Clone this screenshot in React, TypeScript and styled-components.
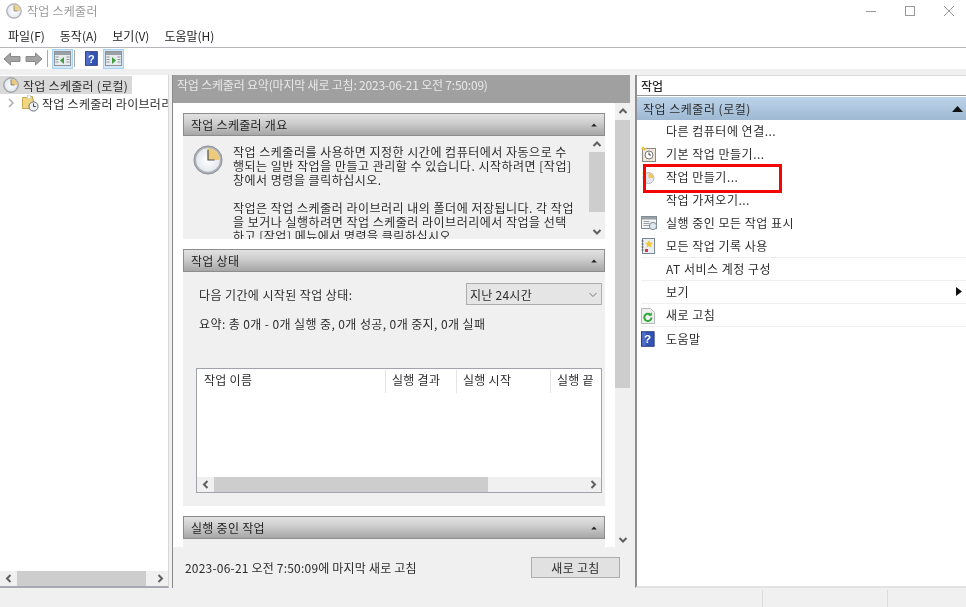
import React from "react";
import styled, { createGlobalStyle } from "styled-components";

const Global = createGlobalStyle`
  html, body { margin: 0; padding: 0; background: #f0f0f0; overflow: hidden; }
  #root { width: 966px; height: 607px; }
  * { box-sizing: border-box; }
`;

const Window = styled.div`
  width: 966px; height: 607px; display: flex; flex-direction: column; background: #fff; overflow: hidden; position: relative;
  font-family: "Noto Sans CJK KR", "Noto Sans", sans-serif; font-size: 12px; color: #2c2c2c; filter: blur(0.4px);
`;
const TitleBar = styled.div`height: 24px; display: flex; align-items: center; padding: 0 0 3px 6px; gap: 5px; color: #9a9a9a; font-size: 12px;`;
const DimIcon = styled.span`display: flex; opacity: .85;`;
const TitleText = styled.span`letter-spacing: .25px;`;
const WinControls = styled.div`margin-left: auto; display: flex; gap: 29px; padding-right: 12px; align-items: center;`;
const MenuBar = styled.div`height: 24px; display: flex; align-items: center; padding: 0 0 1px 8px; gap: 15px; border-bottom: 1px solid #b4b8bc; font-size: 12px; color: #222;`;
const Toolbar = styled.div`height: 21px; background: #fff; display: flex; align-items: center; padding-left: 3px;`;
const ToolSep = styled.div<{ $m: string }>`width: 1px; height: 17px; background: #a8a8a8; margin: 0 ${p => p.$m};`;
const ToolGap = styled.span<{ $w: number }>`width: ${p => p.$w}px; flex: none;`;
const ToolButton = styled.div<{ $active?: boolean }>`
  width: 21px; height: 20px; display: flex; align-items: center; justify-content: center;
  background: ${p => (p.$active ? "#d4e7f8" : "transparent")}; border: 1px solid ${p => (p.$active ? "#a9d3f5" : "transparent")};
`;
const Main = styled.div`flex: 1; min-height: 0; display: flex; background: #f0f0f0; padding-top: 6px;`;

const TreePanel = styled.div`width: 169px; flex: none; display: flex; flex-direction: column; background: #fff; border-bottom: 2px solid #a6aab0; border-right: 1px solid #d8d8d8;`;
const TreeBody = styled.div`flex: 1; padding-top: 1px; overflow: hidden;`;
const TreeRow = styled.div<{ $selected?: boolean }>`
  height: 18px; display: flex; align-items: center; white-space: nowrap; overflow: hidden;
  gap: ${p => (p.$selected ? "4px" : "3px")};
  width: ${p => (p.$selected ? "132px" : "168px")}; background: ${p => (p.$selected ? "#d9d9d9" : "transparent")};
  padding-left: ${p => (p.$selected ? "3px" : "8px")}; letter-spacing: .28px;
  svg { flex: none; }
`;
const HScroll = styled.div`height: 15px; display: flex; align-items: center; background: #f0f0f0; flex: none;`;
const HTrack = styled.div`flex: 1; height: 100%;`;
const HThumb = styled.div<{ $w: number }>`height: 100%; width: ${p => p.$w}px; background: #cdcdcd;`;
const ScrollBtn = styled.div`width: 17px; height: 15px; flex: none; display: flex; align-items: center; justify-content: center;`;

const Splitter = styled.div`width: 3px; flex: none; background: #f0f0f0;`;
const CenterPanel = styled.div`width: 458px; flex: none; display: flex; flex-direction: column; border-left: 1px solid #8a8a8a; background: #f0f0f0;`;
const CenterHeader = styled.div`height: 28px; flex: none; background: #a0a0a0; color: #e8e8e8; padding: 1px 0 0 4px; letter-spacing: -.2px; white-space: nowrap;`;
const CenterBody = styled.div`flex: 1; min-height: 0; display: flex; background: #fff;`;
const SectionList = styled.div`flex: 1; min-width: 0; padding: 10px 10px 0 10px; display: flex; flex-direction: column; gap: 10px; overflow: hidden;`;
const Section = styled.section`flex: none;`;
const SectionHead = styled.div`
  height: 23px; display: flex; align-items: center; justify-content: space-between; padding: 0 7px;
  border: 1px solid #8d8d8d;
  background: linear-gradient(#e2e2e2 0%, #cfcfcf 40%, #a6a6a6 100%); letter-spacing: .28px; color: #222;
`;
const SectionBody = styled.div<{ $h: number }>`height: ${p => p.$h}px; background: #f0f0f0; overflow: hidden;`;
const OverviewRow = styled.div`display: flex; height: 100%;`;
const ClockBox = styled.div`width: 50px; padding: 9px 0 0 10px; flex: none;`;
const OverviewText = styled.div`flex: 1; padding-top: 9px; line-height: 14px; white-space: nowrap; letter-spacing: .5px; overflow: hidden;`;
const VScroll = styled.div<{ $w: number }>`width: ${p => p.$w}px; flex: none; background: #f0f0f0; display: flex; flex-direction: column;`;
const VBtn = styled.div`height: 16px; flex: none; display: flex; align-items: center; justify-content: center;`;
const VTrack = styled.div`flex: 1; min-height: 0;`;
const VThumb = styled.div<{ $h: number; $t: number }>`margin-top: ${p => p.$t}px; height: ${p => p.$h}px; background: #cdcdcd;`;

const StatusBlock = styled.div`padding: 12px 3px 0 16px;`;
const StatusRow = styled.div`display: flex; align-items: center; justify-content: space-between; letter-spacing: .4px;`;
const Select = styled.div`width: 136px; height: 22px; background: #e5e5e5; border: 1px solid #adadad; display: flex; align-items: center; justify-content: space-between; padding: 0 3px 0 3px; letter-spacing: .25px; margin-top: -1px;`;
const Summary = styled.div`margin-top: 10px; letter-spacing: .4px;`;
const Table = styled.div`margin: 36px 0 0 -3px; height: 125px; width: 406px; background: #fff; border: 1px solid #a0a4aa; display: flex; flex-direction: column;`;
const TableHead = styled.div`height: 23px; margin-top: 1px; display: grid; grid-template-columns: 189px 71px 94px 1fr; flex: none;`;
const HeadCell = styled.div`padding-left: 6px; border-right: 1px solid #e5e5e5; letter-spacing: .28px; white-space: nowrap; overflow: hidden; line-height: 20px; &:first-child { padding-left: 7px; } &:last-child { border-right: 0; }`;
const TableFill = styled.div`flex: 1;`;

const CenterFooter = styled.div`height: 41px; flex: none; display: flex; align-items: center; justify-content: space-between; padding: 0 10px 0 12px; letter-spacing: .2px;`;
const RefreshButton = styled.div`width: 89px; height: 21px; background: #e1e1e1; border: 1px solid #adadad; display: flex; align-items: center; justify-content: center; letter-spacing: .3px;`;

const ActionPanel = styled.div`flex: 1; margin-left: 5px; display: flex; flex-direction: column; background: #fff; border-left: 2px solid #8f8f8f; border-bottom: 2px solid #e2e2e2;`;
const ActionHead = styled.div`height: 21px; padding-left: 4px; display: flex; align-items: center; font-weight: 500; border-bottom: 1px solid #9a9a9a; border-top: 1px solid #dcdcdc; flex: none;`;
const ActionGroup = styled.div`height: 23px; margin-top: 1px; flex: none; background: linear-gradient(#bcd3ea, #9fb9d3); display: flex; align-items: center; justify-content: space-between; padding: 0 3px 0 6px; letter-spacing: .5px;`;
const ActionList = styled.div`padding: 0 0 0 4px; margin-top: -1px;`;
const ActionRow = styled.div<{ $line?: boolean }>`
  height: 23.1px; display: flex; align-items: center; letter-spacing: .5px; padding-left: 25px; position: relative;
  border-bottom: ${p => (p.$line ? "1px solid #efefef" : "0")};
`;
const ActionIcon = styled.span`position: absolute; left: 0; top: 4px; display: flex;`;
const RowEnd = styled.span`margin-left: auto; margin-right: 4px; display: flex;`;
const Highlight = styled.div`position: absolute; left: 643px; top: 164px; width: 139px; height: 29px; border: 3px solid #f40606; pointer-events: none;`;

const StatusBar = styled.div`height: 19px; flex: none; background: #f0f0f0; display: flex; justify-content: flex-end; padding-top: 2px;`;
const StatusCell = styled.div<{ $w: number }>`width: ${p => p.$w}px; border-left: 1px solid #dcdcdc;`;

const Clock = ({ s }: { s: number }) => (
  <svg width={s} height={s} viewBox="0 0 32 32">
    <defs>
      <radialGradient id="cf" cx=".5" cy=".5" r=".6"><stop offset="0" stopColor="#fff" /><stop offset="1" stopColor="#dfe4ea" /></radialGradient>
    </defs>
    <circle cx="16" cy="16" r="15" fill="#aeb3b9" stroke="#858c93" strokeWidth="1" />
    <circle cx="16" cy="16" r="12.6" fill="url(#cf)" />
    <path d="M16 16V3.4A12.6 12.6 0 0 1 28.6 16Z" fill="#eccb7c" />
    <path d="M16 5v11h7" fill="none" stroke="#4e5256" strokeWidth="1.3" />
  </svg>
);
const FolderClock = () => (
  <svg width="17" height="17" viewBox="0 0 17 17">
    <path d="M.5 2.5h4l1-1h5v3h1v9H.5Z" fill="#f1d681" stroke="#c9a94e" />
    <rect x="5.5" y="0.5" width="3" height="3" fill="#fff" stroke="#bbb" strokeWidth=".5" />
    <circle cx="11.5" cy="11.5" r="4.6" fill="#eef0f2" stroke="#6b7077" />
    <path d="M11.5 8.5v3h2.4" stroke="#444" fill="none" />
  </svg>
);
const NavArrow = ({ right }: { right?: boolean }) => (
  <svg width="18" height="14" viewBox="0 0 18 14" style={right ? { transform: "scaleX(-1)" } : undefined}>
    <path d="M1 7l6.5-6v3.5H17v5H7.5V13Z" fill="#a3a3a3" stroke="#8a8a8a" />
  </svg>
);
const PaneIcon = ({ right }: { right?: boolean }) => (
  <svg width="17" height="15" viewBox="0 0 17 15">
    <rect x=".5" y=".5" width="16" height="14" fill="#e9ecee" stroke="#8e9499" />
    <rect x="1" y="1" width="15" height="3" fill="#9aa2a8" />
    <path d={right ? "M7 6v7l4-3.5Z" : "M10 6v7l-4-3.5Z"} fill="#3e9d3e" />
    <path d="M1.5 6h3M1.5 8.5h3M1.5 11h3M12.5 6h3M12.5 8.5h3M12.5 11h3" stroke="#8e9499" />
  </svg>
);
const HelpIcon = ({ s = 16 }: { s?: number }) => (
  <svg width={s * 0.85} height={s} viewBox="0 0 14 16">
    <rect x=".5" y=".5" width="13" height="15" fill="#3353b5" stroke="#26397f" />
    <rect x="1" y="1" width="4" height="14" fill="#5f7ed6" opacity=".6" />
    <text x="7" y="12.5" textAnchor="middle" fontSize="12" fontWeight="700" fill="#fff" fontFamily="Liberation Sans">?</text>
  </svg>
);
const Chevron = ({ dir, c = "#606060", w = 2 }: { dir: "u" | "d" | "l" | "r"; c?: string; w?: number }) => {
  const d = { u: "M1.5 6L5 2.5 8.5 6", d: "M1.5 3L5 6.5 8.5 3", l: "M6.5 1L3 4.5 6.5 8", r: "M3.5 1L7 4.5 3.5 8" }[dir];
  return <svg width="10" height="9" viewBox="0 0 10 9"><path d={d} fill="none" stroke={c} strokeWidth={w} /></svg>;
};
const TinyUp = () => <svg width="6" height="4" viewBox="0 0 7 5"><path d="M3.5 .5L7 4.5H0Z" fill="#222" /></svg>;

const TaskClockIcon = () => (
  <svg width="16" height="16" viewBox="0 0 16 16">
    <path d="M1 4.5L3.5 1 5 4 8 3.5 5.5 6Z" fill="#f2c53d" />
    <circle cx="7.5" cy="9" r="5.5" fill="#e4e8ec" stroke="#b4bac0" />
    <path d="M7.5 9V4a5 5 0 0 1 5 5Z" fill="#eec46b" />
  </svg>
);
const BasicTaskIcon = () => (
  <svg width="16" height="17" viewBox="0 0 16 17">
    <rect x="1.5" y="2.5" width="13" height="13" fill="#eee8dc" stroke="#8a8a80" />
    <circle cx="8" cy="9" r="4" fill="#fff" stroke="#777" />
    <path d="M8 6.5V9h2" stroke="#444" fill="none" />
    <path d="M0 3L2 0 3.5 2.5 6 2 4 4.5Z" fill="#f2c53d" />
  </svg>
);
const RunningIcon = () => (
  <svg width="17" height="16" viewBox="0 0 17 16">
    <rect x=".5" y="1.5" width="15" height="12" fill="#f4f5f6" stroke="#858b91" />
    <rect x="1" y="2" width="14" height="2.5" fill="#98a0a8" />
    <path d="M2.5 6.5h6M2.5 8.5h6M2.5 10.5h6" stroke="#9aa0a6" />
    <circle cx="12" cy="11" r="3.6" fill="#dfe8f0" stroke="#7e8a95" />
  </svg>
);
const HistoryIcon = () => (
  <svg width="15" height="16" viewBox="0 0 15 16">
    <rect x="1.5" y=".5" width="12" height="15" fill="#e8eef5" stroke="#7c8794" />
    <path d="M.5 3h2M.5 6h2M.5 9h2M.5 12h2" stroke="#555" />
    <path d="M8 2l1.3 2.6 2.7.3-2 1.9.5 2.7L8 8.2 5.6 9.5l.5-2.7-2-1.9 2.7-.3Z" fill="#f2c53d" />
    <rect x="4" y="11" width="3" height="3" fill="#d33" />
  </svg>
);
const RefreshIcon = () => (
  <svg width="14" height="16" viewBox="0 0 14 16">
    <path d="M.5 .5h9l4 4v11H.5Z" fill="#eef0ee" stroke="#b6b9b6" />
    <path d="M10.5 9.5a3.6 3.6 0 1 1-1.2-2.8" fill="none" stroke="#2fa83a" strokeWidth="2" />
    <path d="M10.8 4.2v3.6H7.2Z" fill="#2fa83a" />
  </svg>
);

const overview = [
  "작업 스케줄러를 사용하면 지정한 시간에 컴퓨터에서 자동으로 수",
  "행되는 일반 작업을 만들고 관리할 수 있습니다. 시작하려면 [작업]",
  "창에서 명령을 클릭하십시오.",
  "\u00a0",
  "작업은 작업 스케줄러 라이브러리 내의 폴더에 저장됩니다. 각 작업",
  "을 보거나 실행하려면 작업 스케줄러 라이브러리에서 작업을 선택",
  "하고 [작업] 메뉴에서 명령을 클릭하십시오.",
];

const actions: { label: string; icon?: React.ReactNode; line?: boolean; arrow?: boolean }[] = [
  { label: "다른 컴퓨터에 연결..." },
  { label: "기본 작업 만들기...", icon: <BasicTaskIcon /> },
  { label: "작업 만들기...", icon: <TaskClockIcon /> },
  { label: "작업 가져오기..." },
  { label: "실행 중인 모든 작업 표시", icon: <RunningIcon /> },
  { label: "모든 작업 기록 사용", icon: <HistoryIcon />, line: true },
  { label: "AT 서비스 계정 구성", line: true },
  { label: "보기", arrow: true, line: true },
  { label: "새로 고침", icon: <RefreshIcon />, line: true },
  { label: "도움말", icon: <HelpIcon s={16} /> },
];

export default function App() {
  return (
    <Window>
      <Global />
      <TitleBar>
        <DimIcon><Clock s={16} /></DimIcon>
        <TitleText>작업 스케줄러</TitleText>
        <WinControls>
          <svg width="10" height="10"><path d="M0 5.5h10" stroke="#999" /></svg>
          <svg width="10" height="10"><rect x=".5" y=".5" width="9" height="9" fill="none" stroke="#999" /></svg>
          <svg width="10" height="10"><path d="M0 0l10 10M10 0L0 10" stroke="#999" /></svg>
        </WinControls>
      </TitleBar>
      <MenuBar>
        <span>파일(F)</span><span>동작(A)</span><span>보기(V)</span><span>도움말(H)</span>
      </MenuBar>
      <Toolbar>
        <NavArrow /><ToolGap $w={4} /><NavArrow right />
        <ToolSep $m="4px" />
        <ToolButton $active><PaneIcon /></ToolButton>
        <ToolSep $m="1px" />
        <ToolGap $w={5} />
        <ToolButton><HelpIcon s={15} /></ToolButton>
        <ToolGap $w={1} />
        <ToolButton $active><PaneIcon right /></ToolButton>
      </Toolbar>
      <Main>
        <TreePanel>
          <TreeBody>
            <TreeRow $selected><Clock s={16} />작업 스케줄러 (로컬)</TreeRow>
            <TreeRow>
              <svg width="7" height="10" viewBox="0 0 7 10"><path d="M1 1l4 4-4 4" fill="none" stroke="#a6a6a6" strokeWidth="1.4" /></svg>
              <ToolGap $w={1} />
              <FolderClock />작업 스케줄러 라이브러리
            </TreeRow>
          </TreeBody>
          <HScroll>
            <ScrollBtn><Chevron dir="l" /></ScrollBtn>
            <HTrack><HThumb $w={129} /></HTrack>
            <ScrollBtn><Chevron dir="r" /></ScrollBtn>
          </HScroll>
        </TreePanel>
        <Splitter />
        <CenterPanel>
          <CenterHeader>작업 스케줄러 요약(마지막 새로 고침: 2023-06-21 오전 7:50:09)</CenterHeader>
          <CenterBody>
            <SectionList>
              <Section>
                <SectionHead>작업 스케줄러 개요<TinyUp /></SectionHead>
                <SectionBody $h={103}>
                  <OverviewRow>
                    <ClockBox><Clock s={30} /></ClockBox>
                    <OverviewText>{overview.map((l, i) => <div key={i}>{l}</div>)}</OverviewText>
                    <VScroll $w={16}>
                      <VBtn><Chevron dir="u" /></VBtn>
                      <VTrack><VThumb $t={0} $h={60} /></VTrack>
                      <VBtn><Chevron dir="d" /></VBtn>
                    </VScroll>
                  </OverviewRow>
                </SectionBody>
              </Section>
              <Section>
                <SectionHead>작업 상태<TinyUp /></SectionHead>
                <SectionBody $h={234}>
                  <StatusBlock>
                    <StatusRow>
                      다음 기간에 시작된 작업 상태:
                      <Select>지난 24시간<Chevron dir="d" c="#777" w={1} /></Select>
                    </StatusRow>
                    <Summary>요약: 총 0개 - 0개 실행 중, 0개 성공, 0개 중지, 0개 실패</Summary>
                    <Table>
                      <TableHead>
                        <HeadCell>작업 이름</HeadCell>
                        <HeadCell>실행 결과</HeadCell>
                        <HeadCell>실행 시작</HeadCell>
                        <HeadCell>실행 끝</HeadCell>
                      </TableHead>
                      <TableFill />
                      <HScroll>
                        <ScrollBtn><Chevron dir="l" /></ScrollBtn>
                        <HTrack><HThumb $w={274} /></HTrack>
                        <ScrollBtn><Chevron dir="r" /></ScrollBtn>
                      </HScroll>
                    </Table>
                  </StatusBlock>
                </SectionBody>
              </Section>
              <Section>
                <SectionHead>실행 중인 작업<TinyUp /></SectionHead>
                <SectionBody $h={20} />
              </Section>
            </SectionList>
            <VScroll $w={15}>
              <VBtn><Chevron dir="u" /></VBtn>
              <VTrack><VThumb $t={1} $h={268} /></VTrack>
              <VBtn><Chevron dir="d" /></VBtn>
            </VScroll>
          </CenterBody>
          <CenterFooter>
            <span>2023-06-21 오전 7:50:09에 마지막 새로 고침</span>
            <RefreshButton>새로 고침</RefreshButton>
          </CenterFooter>
        </CenterPanel>
        <ActionPanel>
          <ActionHead>작업</ActionHead>
          <ActionGroup>작업 스케줄러 (로컬)<svg width="11" height="6" viewBox="0 0 11 6"><path d="M5.5 0L11 6H0Z" fill="#111" /></svg></ActionGroup>
          <ActionList>
            {actions.map(a => (
              <ActionRow key={a.label} $line={a.line}>
                {a.icon && <ActionIcon>{a.icon}</ActionIcon>}
                {a.label}
                {a.arrow && <RowEnd><svg width="6" height="9" viewBox="0 0 6 9"><path d="M0 0l6 4.5L0 9Z" fill="#111" /></svg></RowEnd>}
              </ActionRow>
            ))}
          </ActionList>
        </ActionPanel>
      </Main>
      <StatusBar>
        <StatusCell $w={125} />
        <StatusCell $w={79} />
      </StatusBar>
      <Highlight />
    </Window>
  );
}
